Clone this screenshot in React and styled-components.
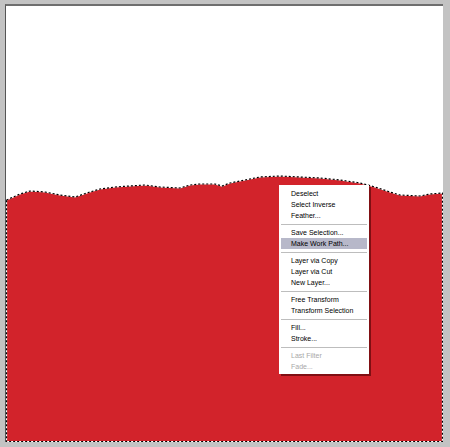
import React from 'react';
import styled, { createGlobalStyle } from 'styled-components';

const GlobalStyle = createGlobalStyle`
  html, body {
    margin: 0;
    padding: 0;
    background: #c3c3c3;
  }
  body {
    width: 450px;
    height: 447px;
    overflow: hidden;
    font-family: "Liberation Sans", Arial, sans-serif;
  }
`;

const Workspace = styled.div`
  padding: 4px 0 0 5px;
`;

const Canvas = styled.div`
  position: relative;
  width: 437px;
  height: 436px;
  background: #ffffff;
  border-top: 2px solid #6e6e6e;
  border-left: 1px solid #555555;
`;

const Art = styled.svg`
  display: block;
`;

const Menu = styled.ul`
  position: absolute;
  left: 273px;
  top: 179px;
  width: 90px;
  margin: 0;
  padding: 3px 0 2px;
  list-style: none;
  background: #ffffff;
  box-shadow: 2px 2px 0 rgba(60, 0, 0, 0.55);
`;

const Item = styled.li`
  height: 11px;
  line-height: 11px;
  margin: 0 2px;
  padding-left: 10px;
  font-size: 7px;
  white-space: nowrap;
  color: ${(p) => (p.disabled ? '#a8a8a8' : '#000000')};
  background: ${(p) => (p.active ? '#b7b8c9' : 'transparent')};
`;

const Separator = styled.li`
  height: 6px;
  margin: 0 2px;
  display: flex;
  align-items: center;

  &::after {
    content: '';
    flex: 1;
    height: 1px;
    background: #bdbdbd;
  }
`;

// top edge of the red fill, in canvas coordinates
const edge = [
  [0, 194], [14, 188], [24, 185], [39, 186], [54, 189], [69, 191], [84, 186],
  [94, 183], [109, 181], [124, 180], [139, 179], [154, 181], [174, 182],
  [184, 179], [194, 178], [209, 178], [216, 180], [224, 177], [234, 175],
  [244, 173], [254, 171], [274, 170], [294, 171], [314, 172], [334, 174],
  [354, 177], [369, 181], [384, 186], [394, 189], [414, 190], [424, 188],
  [437, 187],
];

const shapePath =
  'M' + edge.map(([x, y]) => `${x},${y}`).join(' L') + ' L437,436 L0,436 Z';

const antsPath =
  'M0.5,' + edge[0][1] + ' ' +
  edge.map(([x, y]) => `L${Math.min(Math.max(x, 0.5), 436.5)},${y}`).join(' ') +
  ' L436.5,435.5 L0.5,435.5 Z';

const groups = [
  [{ label: 'Deselect' }, { label: 'Select Inverse' }, { label: 'Feather...' }],
  [{ label: 'Save Selection...' }, { label: 'Make Work Path...', active: true }],
  [{ label: 'Layer via Copy' }, { label: 'Layer via Cut' }, { label: 'New Layer...' }],
  [{ label: 'Free Transform' }, { label: 'Transform Selection' }],
  [{ label: 'Fill...' }, { label: 'Stroke...' }],
  [{ label: 'Last Filter', disabled: true }, { label: 'Fade...', disabled: true }],
];

export default function App() {
  return (
    <>
      <GlobalStyle />
      <Workspace>
        <Canvas>
          <Art width="437" height="436" viewBox="0 0 437 436">
            <path d={shapePath} fill="#d2232b" />
            <path d={antsPath} fill="none" stroke="#ffffff" strokeWidth="1.2" />
            <path
              d={antsPath}
              fill="none"
              stroke="#000000"
              strokeWidth="1.2"
              strokeDasharray="2 2"
            />
          </Art>
          <Menu>
            {groups.map((group, gi) => (
              <React.Fragment key={gi}>
                {gi > 0 && <Separator />}
                {group.map((it) => (
                  <Item key={it.label} active={it.active} disabled={it.disabled}>
                    {it.label}
                  </Item>
                ))}
              </React.Fragment>
            ))}
          </Menu>
        </Canvas>
      </Workspace>
    </>
  );
}
